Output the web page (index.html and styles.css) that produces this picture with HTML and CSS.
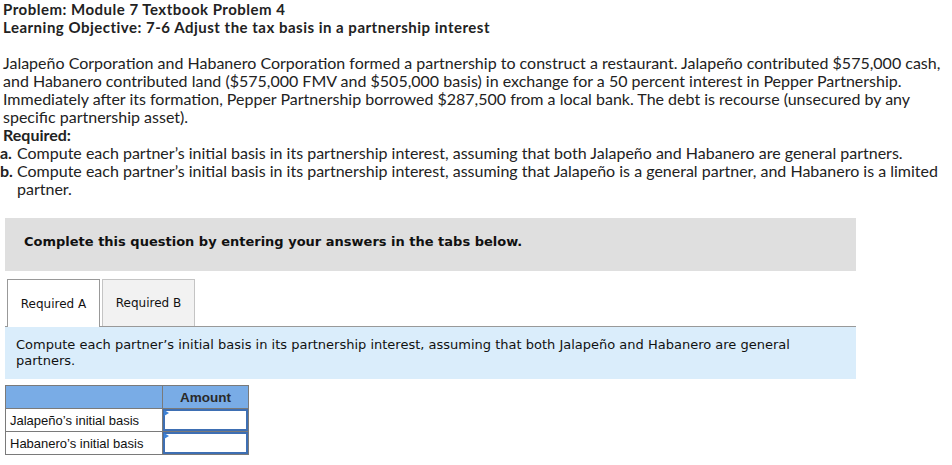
FILE: index.html
```html
<!DOCTYPE html>
<html>
<head>
<meta charset="utf-8">
<link rel="stylesheet" href="styles.css">
</head>
<body>
<div class="page">
  <div class="title">
    <div>Problem: Module 7 Textbook Problem 4</div>
    <div>Learning Objective: 7-6 Adjust the tax basis in a partnership interest</div>
  </div>
  <div class="problem">
    <p class="intro">Jalapeño Corporation and Habanero Corporation formed a partnership to construct a restaurant. Jalapeño contributed $575,000 cash, and Habanero contributed land ($575,000 FMV and $505,000 basis) in exchange for a 50 percent interest in Pepper Partnership. Immediately after its formation, Pepper Partnership borrowed $287,500 from a local bank. The debt is recourse (unsecured by any specific partnership asset).</p>
    <div class="req">Required:</div>
    <div class="item"><b class="lbl">a.</b><span>Compute each partner’s initial basis in its partnership interest, assuming that both Jalapeño and Habanero are general partners.</span></div>
    <div class="item"><b class="lbl">b.</b><span>Compute each partner’s initial basis in its partnership interest, assuming that Jalapeño is a general partner, and Habanero is a limited partner.</span></div>
  </div>
  <div class="instructions">Complete this question by entering your answers in the tabs below.</div>
  <div class="tabs">
    <div class="tab active">Required A</div>
    <div class="tab">Required B</div>
  </div>
  <div class="prompt">Compute each partner’s initial basis in its partnership interest, assuming that both Jalapeño and Habanero are general partners.</div>
  <table class="grid">
    <colgroup><col class="w1"><col class="w2"></colgroup>
    <tr class="head"><th class="c1"></th><th class="c2">Amount</th></tr>
    <tr><td class="c1">Jalapeño’s initial basis</td><td class="cell"><div class="input"></div></td></tr>
    <tr><td class="c1">Habanero’s initial basis</td><td class="cell"><div class="input"></div></td></tr>
  </table>
</div>
</body>
</html>
```

FILE: styles.css
```css
html, body { margin: 0; padding: 0; background: #fff; }
.page { width: 952px; color: #222; }
.title {
  font-family: Lato, "Open Sans", sans-serif;
  font-weight: 700;
  font-size: 15px;
  letter-spacing: 0.5px;
  line-height: 18px;
  padding: 0 0 0 3px;
}
.problem {
  font-family: Lato, "Open Sans", sans-serif;
  font-size: 16px;
  line-height: 18px;
  margin-top: 18px;
}
.intro { margin: 0; padding-left: 3px; width: 945px; }
.req { font-weight: 700; padding-left: 3px; }
.item { display: flex; width: 945px; }
.lbl { width: 17px; flex: none; }
.instructions {
  margin: 20px 96px 0 5px;
  background: #dfdfdf;
  height: 53px;
  box-sizing: border-box;
  padding: 0 0 6px 19px;
  display: flex;
  align-items: center;
  font-family: Verdana, "DejaVu Sans", sans-serif;
  font-weight: 700;
  font-size: 13px;
  color: #111;
}
.tabs {
  display: flex;
  gap: 2px;
  margin: 8px 96px 0 7px;
}
.tab {
  width: 93px;
  height: 47px;
  box-sizing: border-box;
  border: 1px solid #c4c4c4;
  border-bottom: none;
  background: #f2f2f2;
  font-family: Verdana, "DejaVu Sans", sans-serif;
  font-size: 12px;
  display: flex;
  align-items: center;
  justify-content: center;
  color: #111;
}
.tab.active { background: #fff; border-color: #999; height: 48px; margin-bottom: -1px; position: relative; }
.prompt {
  margin: 0 96px 0 5px;
  border-top: 1px solid #999;
  background: #daedfb;
  padding: 10px 11px 9px;
  height: 33px;
  font-family: Verdana, "DejaVu Sans", sans-serif;
  font-size: 13px;
  line-height: 16px;
  color: #111;
}
.grid {
  margin: 6px 0 0 5px;
  border-collapse: collapse;
  table-layout: fixed;
  width: 243px;
  font-family: Arial, "Liberation Sans", sans-serif;
  font-size: 13px;
  color: #111;
}
.w1 { width: 157px; }
.w2 { width: 86px; }
.grid th, .grid td { border: 1px solid #7a7a7a; padding: 0; height: 22px; }
.head th { background: #79ace6; }
.c1 { padding-left: 4px !important; text-align: left; }
.c2 { font-weight: 700; font-size: 13.5px; text-align: center; color: #2a2a2a; }
.cell { position: relative; }
.input {
  height: 18px;
  border: 2px solid #3e6fb3;
  background: #fff;
  position: relative;
}
.input::before {
  content: "";
  position: absolute;
  left: -1px;
  top: -1px;
  border-left: 5px solid #3e82d6;
  border-top: 3px solid transparent;
  border-bottom: 3px solid transparent;
}
```
